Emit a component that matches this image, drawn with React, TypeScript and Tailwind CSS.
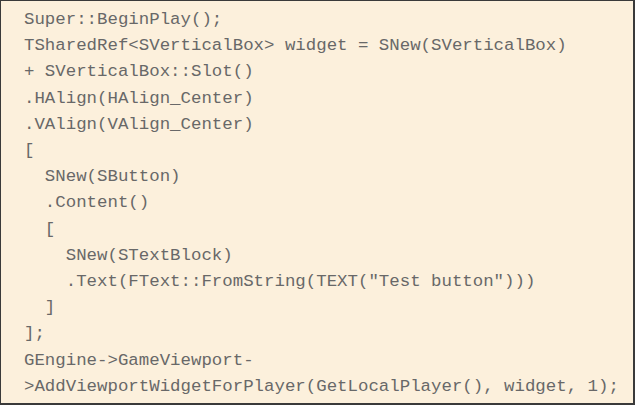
import React from "react";

const lines: string[] = [
  "Super::BeginPlay();",
  "TSharedRef<SVerticalBox> widget = SNew(SVerticalBox)",
  "+ SVerticalBox::Slot()",
  ".HAlign(HAlign_Center)",
  ".VAlign(VAlign_Center)",
  "[",
  "  SNew(SButton)",
  "  .Content()",
  "  [",
  "    SNew(STextBlock)",
  "    .Text(FText::FromString(TEXT(\"Test button\")))",
  "  ]",
  "];",
  "GEngine->GameViewport-",
  ">AddViewportWidgetForPlayer(GetLocalPlayer(), widget, 1);",
];

export default function App() {
  return (
    <div className="w-[636px] h-[406px] bg-white">
      <div className="w-[635px] h-[405px] bg-[#fcf0dc] border-l border-t border-r-2 border-b-2 border-[#3a3a3a] pt-[6px] pl-[23px]">
        <pre
          className="m-0 text-[17.4px] leading-[26.2px] text-[#686868] whitespace-pre"
          style={{ fontFamily: '"Liberation Mono", "Courier New", monospace' }}
        >
          {lines.map((l, i) => (
            <div key={i}>{l}</div>
          ))}
        </pre>
      </div>
    </div>
  );
}
